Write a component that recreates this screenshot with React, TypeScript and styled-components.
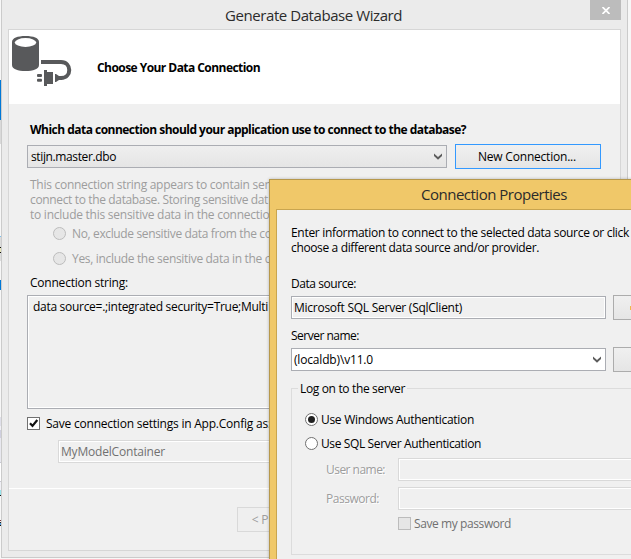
import React from "react";
import styled, { createGlobalStyle, css } from "styled-components";

const GlobalStyle = createGlobalStyle`
  *, *::before, *::after { box-sizing: border-box; }
  body { margin: 0; overflow: hidden; background: #f7f7f7; }
  button, input { font: inherit; }
`;

/* ---------- shared parts ---------- */

const Text = styled.span<{ $ls?: number; $bold?: boolean; $tone?: string; $etched?: boolean }>`
  display: block;
  white-space: pre;
  line-height: 15px;
  color: ${(p) => p.$tone ?? "#000"};
  font-weight: ${(p) => (p.$bold ? 700 : 400)};
  letter-spacing: ${(p) => p.$ls ?? -0.3}px;
  ${(p) => p.$etched && css`text-shadow: 1px 1px 0 #fff;`}
`;

const Caption = styled.h1<{ $ls: number }>`
  margin: 0;
  font-size: 15px;
  font-weight: 400;
  line-height: 20px;
  letter-spacing: ${(p) => p.$ls}px;
  white-space: nowrap;
  color: #2b2b2b;
`;

const Field = styled.div<{ $kind?: "edit" | "readonly" | "disabled" | "list"; $width: number }>`
  display: flex;
  align-items: center;
  justify-content: space-between;
  flex: none;
  width: ${(p) => p.$width}px;
  height: 23px;
  padding: 0 4px 0 ${(p) => (p.$kind === "list" ? 3 : 2)}px;
  border: 1px solid ${(p) => (p.$kind === "disabled" ? "#d9d9d9" : "#abadb3")};
  background: ${(p) =>
    p.$kind === "edit" ? "#fff" : p.$kind === "list" ? "linear-gradient(#efefef, #e5e5e5)" : "#f0f0f0"};
  ${(p) =>
    (p.$kind === "readonly" || p.$kind === "disabled") &&
    css`box-shadow: inset 0 0 0 1px #fff;`}
`;

const Button = styled.button<{ $width: number; $focused?: boolean; $disabled?: boolean }>`
  display: flex;
  flex: none;
  align-items: center;
  justify-content: center;
  width: ${(p) => p.$width}px;
  height: 25px;
  padding: 0 2px 0 0;
  border: 1px solid ${(p) => (p.$focused ? "#3399ff" : p.$disabled ? "#d9d9d9" : "#acacac")};
  background: ${(p) => (p.$disabled ? "#efefef" : "linear-gradient(#f0f0f0, #e5e5e5)")};
`;

const Radio = styled.span<{ $checked?: boolean; $disabled?: boolean }>`
  flex: none;
  display: grid;
  place-items: center;
  width: 13px;
  height: 13px;
  border: 1px solid ${(p) => (p.$disabled ? "#bcbcbc" : "#707070")};
  border-radius: 50%;
  background: ${(p) => (p.$disabled ? "#e6e6e6" : "#fff")};
  &::after {
    content: "";
    width: 7px;
    height: 7px;
    border-radius: 50%;
    background: ${(p) => (p.$checked ? "#212121" : "transparent")};
  }
`;

const Check = styled.span<{ $disabled?: boolean }>`
  flex: none;
  width: 13px;
  height: 13px;
  border: 1px solid ${(p) => (p.$disabled ? "#bcbcbc" : "#707070")};
  background: ${(p) => (p.$disabled ? "#e6e6e6" : "#fff")};
  svg { display: block; }
`;

const Row = styled.div<{ $top?: number; $left?: number; $gap?: number }>`
  display: flex;
  align-items: center;
  gap: ${(p) => p.$gap ?? 6}px;
  margin: ${(p) => p.$top ?? 0}px 0 0 ${(p) => p.$left ?? 0}px;
`;

const Chevron = () => (
  <svg width="8" height="7" viewBox="0 0 8 7">
    <path d="M0 0.5 L4 4 L8 0.5 V3 L4 6.8 L0 3 Z" fill="#5c5c5c" />
  </svg>
);

/* ---------- desktop and wizard window ---------- */

const Desktop = styled.div`
  position: relative;
  display: flex;
  align-items: flex-start;
  width: 631px;
  height: 559px;
  overflow: hidden;
  font: 12px/15px "Open Sans", "Noto Sans", sans-serif;
`;

const Backdrop = styled.div`
  width: 1px;
  height: 559px;
  background: linear-gradient(
    #f7f7f7 80px, #0078d7 80px 120px, #d9d9d9 120px 144px, #f7f7f7 144px 236px,
    #7dc0ee 236px 237px, #dcdcdc 237px 247px, #111 247px 248px, #e6e6b8 248px 252px,
    #111 252px 253px, #dcdcdc 253px 261px, #f7f7f7 261px 280px, #0078d7 280px 290px,
    #f7f7f7 290px 417px, #dfdfe9 417px 426px, #f0f0f5 426px 430px, #cfcfdf 430px 438px,
    #e8e8ef 438px 462px, #c8c8d2 462px 463px, #fff 463px 481px, #c8c8d2 481px 482px,
    #f0f0f5 482px 490px, #98e4ec 490px 495px, #111 495px 496px, #f7f7f7 496px 520px,
    #803030 520px 521px, #f7f7f7 521px 522px, #222 522px 523px, #4f9ad8 523px 525px,
    #111 525px 526px, #f7f7f7 526px
  );
`;

const Wizard = styled.section`
  width: 627px;
  height: 558px;
  padding: 0 6px;
  border: 1px solid #cbcbcb;
  border-top: 0;
  background: #ebebeb;
`;

const TitleBar = styled.header`
  display: grid;
  grid-template-columns: 1fr auto 31px;
  height: 29px;
  ${Caption} { margin: 5px 188px 0 0; }
`;

const CloseButton = styled.button`
  display: grid;
  place-items: center;
  width: 31px;
  height: 20px;
  padding: 1px 0 0 1px;
  border: 0;
  background: #bcbcbc;
`;

const Client = styled.div`
  display: flex;
  flex-direction: column;
  height: 522px;
  border: 1px solid #d6d6d6;
  background: #f0f0f0;
`;

const Banner = styled.div`
  display: flex;
  flex: none;
  height: 74px;
  background: #fff;
  svg { flex: none; margin: 5px 0 0 2px; }
  ${Text} { margin: 30px 0 0 25px; }
`;

const WizardBody = styled.div`
  height: 385px;
  padding: 18px 0 0 18px;
  border-bottom: 1px solid #fff;
  overflow: hidden;
`;

const Notice = styled.div`
  margin: 8px 0 0 3px;
`;

const StringBox = styled.div`
  width: 574px;
  height: 114px;
  margin-top: 5px;
  padding: 3px 5px;
  border: 1px solid #abadb3;
  box-shadow: inset 0 0 0 1px #fff;
`;

const WizardFooter = styled.footer`
  padding: 18px 0 0 228px;
  ${Text} { margin-right: 34px; }
`;

const DatabasePlug = () => (
  <svg width="61" height="53" viewBox="0 0 61 53">
    <g fill="#58595b">
      <path d="M1 7 C1 3 6.500 1 14.500 1 S28 3 28 7 V30 C28 34 22 36 14.500 36 S1 34 1 30 Z" />
      <rect x="26" y="39" width="5" height="3" rx="1" />
      <rect x="26" y="43.700" width="5" height="3" rx="1" />
      <path d="M33 35 h3 v2 h6 v12 h-6 v2 h-3 z" />
      <path d="M44 39 h1 L48 41 h3 v4 h-3 L45 47 h-1 Z" />
    </g>
    <ellipse cx="14.500" cy="7.500" rx="10.700" ry="4.400" fill="#fff" />
    <path d="M30 27 H50 C61 27 61 43 50 43 H47" fill="none" stroke="#58595b" strokeWidth="4" />
  </svg>
);

/* ---------- connection dialog ---------- */

const Dialog = styled.section`
  position: absolute;
  left: 269px;
  top: 179px;
  width: 420px;
  height: 420px;
  padding-left: 6px;
  border: 1px solid #b6984c;
  background: #f0c869;
  box-shadow: 0 0 3px rgba(0, 0, 0, 0.25);
`;

const DialogTitle = styled.header`
  height: 29px;
  padding: 4px 0 0 145px;
`;

const DialogClient = styled.div`
  height: 400px;
  padding: 15px 0 0 14px;
  border: 1px solid #c9a54f;
  background: #f0f0f0;
`;

const AccentMark = styled.span`
  width: 4px;
  height: 4px;
  margin-left: -35px;
  background: #f0b84a;
`;

const Group = styled.fieldset`
  width: 400px;
  height: 174px;
  margin: 9px 0 0;
  padding: 0;
  border: 1px solid #dcdcdc;
  legend {
    height: 15px;
    margin-left: 6px;
    padding: 0 2px;
  }
`;

const Credential = styled.div<{ $top: number }>`
  display: grid;
  grid-template-columns: 72px auto;
  align-items: center;
  margin: ${(p) => p.$top}px 0 0 34px;
`;

const dim = "#9d9d9d";

export default function App() {
  return (
    <>
      <GlobalStyle />
      <Desktop>
        <Backdrop />
        <Wizard>
          <TitleBar>
            <span />
            <Caption $ls={-0.43}>Generate Database Wizard</Caption>
            <CloseButton aria-label="Close">
              <svg width="8" height="7" viewBox="0 0 8 7">
                <path d="M0.500 0 L7.500 7 M7.500 0 L0.500 7" stroke="#fff" strokeWidth="1.700" />
              </svg>
            </CloseButton>
          </TitleBar>
          <Client>
            <Banner>
              <DatabasePlug />
              <Text $bold $ls={-0.553}>Choose Your Data Connection</Text>
            </Banner>
            <WizardBody>
              <Row $left={3}>
                <Text $bold $ls={-0.522}>Which data connection should your application use to connect to the database?</Text>
              </Row>
              <Row $top={7} $gap={8}>
                <Field $kind="list" $width={420}>
                  <Text $ls={-0.378}>stijn.master.dbo</Text>
                  <Chevron />
                </Field>
                <Button $width={146} $focused>
                  <Text $ls={-0.207}>New Connection...</Text>
                </Button>
              </Row>
              <Notice>
                <Text $tone={dim} $ls={-0.27}>This connection string appears to contain sen</Text>
                <Text $tone={dim} $ls={-0.356}>connect to the database. Storing sensitive dat</Text>
                <Text $tone={dim} $ls={-0.25}>to include this sensitive data in the connectio</Text>
              </Notice>
              <Row $top={4} $left={26}>
                <Radio $disabled />
                <Text $tone={dim} $ls={-0.366}>No, exclude sensitive data from the co</Text>
              </Row>
              <Row $top={10} $left={26}>
                <Radio $disabled />
                <Text $tone={dim} $ls={-0.323}>Yes, include the sensitive data in the c</Text>
              </Row>
              <Row $top={9} $left={3}>
                <Text $ls={-0.22}>Connection string:</Text>
              </Row>
              <StringBox>
                <Text $ls={-0.291}>data source=.;integrated security=True;Multi</Text>
              </StringBox>
              <Row $top={7}>
                <Check>
                  <svg width="11" height="11" viewBox="0 0 11 11">
                    <path d="M2 5.200 L4.500 7.900 L9.300 2" fill="none" stroke="#111" strokeWidth="2.200" />
                  </svg>
                </Check>
                <Text $ls={-0.224}>Save connection settings in App.Config as:</Text>
              </Row>
              <Row $top={9} $left={31}>
                <Field $kind="disabled" $width={388}>
                  <Text $tone="#707070" $ls={-0.19}>MyModelContainer</Text>
                </Field>
              </Row>
            </WizardBody>
            <WizardFooter>
              <Button $width={82} $disabled>
                <Text $tone={dim} $ls={-0.2}>{"< P"}</Text>
              </Button>
            </WizardFooter>
          </Client>
        </Wizard>

        <Dialog>
          <DialogTitle>
            <Caption $ls={-0.495}>Connection Properties</Caption>
          </DialogTitle>
          <DialogClient>
            <Text $ls={-0.309}>Enter information to connect to the selected data source or click</Text>
            <Text $ls={-0.362}>choose a different data source and/or provider.</Text>
            <Row $top={21}>
              <Text $ls={-0.44}>Data source:</Text>
            </Row>
            <Row $top={4} $gap={7}>
              <Field $kind="readonly" $width={315}>
                <Text $ls={-0.261}>Microsoft SQL Server (SqlClient)</Text>
              </Field>
              <Button $width={75}>
                <AccentMark />
              </Button>
            </Row>
            <Row $top={8}>
              <Text $ls={-0.5}>Server name:</Text>
            </Row>
            <Row $top={4} $gap={7}>
              <Field $kind="edit" $width={315}>
                <Text $ls={-0.173}>(localdb)\v11.0</Text>
                <Chevron />
              </Field>
              <Button $width={75} />
            </Row>
            <Group>
              <legend>
                <Text $ls={-0.346}>Log on to the server</Text>
              </legend>
              <Row $top={16} $left={13} $gap={3}>
                <Radio $checked />
                <Text $ls={-0.299}>Use Windows Authentication</Text>
              </Row>
              <Row $top={9} $left={13} $gap={3}>
                <Radio />
                <Text $ls={-0.376}>Use SQL Server Authentication</Text>
              </Row>
              <Credential $top={7}>
                <Text $tone={dim} $etched $ls={-0.527}>User name:</Text>
                <Field $kind="disabled" $width={280} />
              </Credential>
              <Credential $top={6}>
                <Text $tone={dim} $etched $ls={-0.472}>Password:</Text>
                <Field $kind="disabled" $width={280} />
              </Credential>
              <Row $top={6} $left={106} $gap={3}>
                <Check $disabled />
                <Text $tone="#707070" $ls={-0.409}>Save my password</Text>
              </Row>
            </Group>
          </DialogClient>
        </Dialog>
      </Desktop>
    </>
  );
}
